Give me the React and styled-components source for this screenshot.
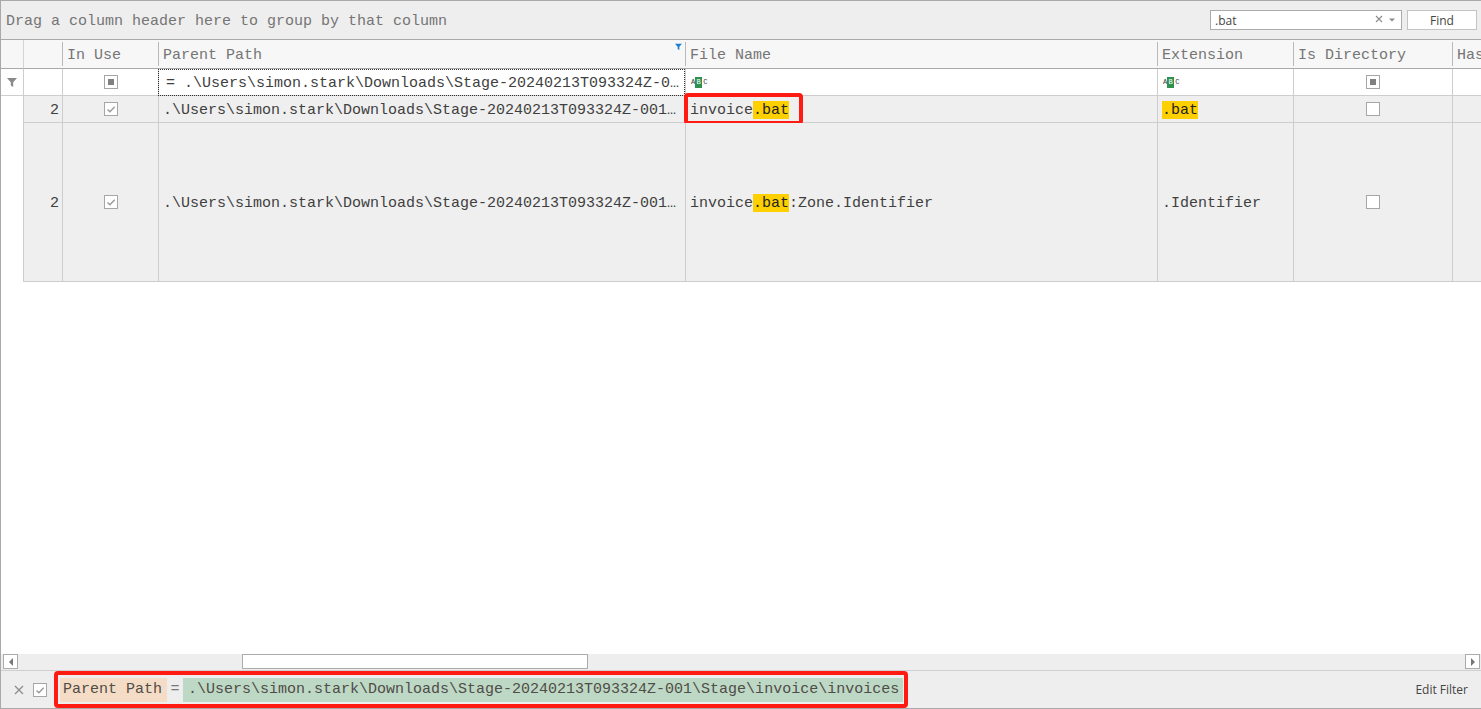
import React from "react";
import styled, { createGlobalStyle } from "styled-components";

const GlobalStyle = createGlobalStyle`
  html, body {
    margin: 0;
    padding: 0;
    height: 100%;
    overflow: hidden;
    background: #fff;
  }
  #root {
    height: 100%;
  }
`;

const MONO = `"Liberation Mono", "DejaVu Sans Mono", monospace`;
const UI = `"Open Sans", "Noto Sans", sans-serif`;
const COLS = [22, 39, 96, 527, 472, 136, 159, 120];
const ROW_BG = "#efefef";
const FULL_PATH = ".\\Users\\simon.stark\\Downloads\\Stage-20240213T093324Z-001\\Stage\\invoice\\invoices";

const Page = styled.div`
  height: 709px;
  box-sizing: border-box;
  display: flex;
  flex-direction: column;
  border-top: 1px solid #a9a9a9;
  border-left: 1px solid #a9a9a9;
  font-family: ${MONO};
  font-size: 15px;
  color: #3f3f3f;
  white-space: nowrap;
  overflow: hidden;
`;

const GroupPanel = styled.div`
  height: 39px;
  flex: none;
  box-sizing: border-box;
  display: flex;
  align-items: center;
  justify-content: space-between;
  padding: 0 4px 0 5px;
  background: #eee;
  border-bottom: 1px solid #a9a9a9;
  color: #757575;
`;

const GroupHint = styled.span`
  padding-top: 2px;
`;

const SearchArea = styled.div`
  display: flex;
  gap: 5px;
  font-family: ${UI};
  font-size: 12px;
  color: #444;
`;

const SearchBox = styled.div`
  width: 192px;
  height: 20px;
  box-sizing: border-box;
  display: flex;
  align-items: center;
  padding: 0 4px;
  background: #fff;
  border: 1px solid #ababab;
`;

const SearchValue = styled.span`
  flex: 1;
`;

const FindButton = styled.div`
  width: 70px;
  height: 20px;
  box-sizing: border-box;
  display: flex;
  align-items: center;
  justify-content: center;
  background: #fff;
  border: 1px solid #c4c4c4;
`;

const GridArea = styled.div`
  flex: 1;
  min-height: 0;
  overflow: hidden;
  background: #fff;
`;

const Row = styled.div`
  display: flex;
  width: max-content;
  height: ${(p) => p.$height}px;
`;

const Cell = styled.div`
  position: relative;
  flex: none;
  width: ${(p) => p.$width}px;
  box-sizing: border-box;
  display: flex;
  align-items: center;
  justify-content: ${(p) => p.$justify || "flex-start"};
  padding: ${(p) => p.$padding || "0 4px"};
  background: ${(p) => p.$bg};
  border-bottom: 1px solid #cdcdcd;
  border-left: ${(p) => (p.$first ? "none" : "1px solid #cdcdcd")};
`;

const CellText = styled.span`
  padding-top: 2px;
`;

const Blank = styled.div`
  flex: none;
  width: ${(p) => p.$width}px;
`;

const HeadCell = styled.div`
  position: relative;
  flex: none;
  width: ${(p) => p.$width}px;
  box-sizing: border-box;
  height: 100%;
  display: flex;
  align-items: center;
  padding: 2px 0;
  background: #f7f7f7;
  border-bottom: 1px solid #a9a9a9;
  border-left: ${(p) => (p.$edge ? "1px solid #d4d4d4" : "none")};
  color: #757575;
`;

const HeadLabel = styled.div`
  height: 100%;
  flex: 1;
  display: flex;
  align-items: center;
  box-sizing: border-box;
  padding: 2px 0 0 4px;
  border-left: ${(p) => (p.$noLine ? "none" : "1px solid #b9b9b9")};
`;

const FilterMark = styled.div`
  position: absolute;
  top: 3px;
  right: 3px;
  display: flex;
`;

const ActiveCell = styled(Cell)`
  outline: 1px dotted #333;
  outline-offset: -1px;
  padding: 0 0 0 7px;
`;

const Hit = styled.span`
  display: inline-block;
  padding-top: 2px;
  line-height: 16px;
  background: #ffd000;
  color: #222;
`;

const RedBox = styled.div`
  position: absolute;
  left: -2px;
  top: -3px;
  width: 119px;
  height: 32px;
  box-sizing: border-box;
  border: 4px solid #ff1a12;
  border-radius: 4px;
  pointer-events: none;
`;

const Check = styled.span`
  width: 14px;
  height: 14px;
  box-sizing: border-box;
  display: flex;
  align-items: center;
  justify-content: center;
  flex: none;
  background: #fff;
  border: 1px solid #a6a6a6;
`;

const CheckDot = styled.span`
  width: 6px;
  height: 6px;
  background: #808080;
`;

const AbcIcon = styled.span`
  display: inline-flex;
  align-items: center;
  margin-left: 1px;
  font-size: 7px;
  line-height: 9px;
  color: #333;
`;

const AbcGreen = styled.span`
  width: 7px;
  height: 11px;
  margin-right: 1px;
  display: flex;
  align-items: center;
  justify-content: center;
  background: #2f9150;
  color: #fff;
`;

const ScrollBar = styled.div`
  height: 17px;
  flex: none;
  box-sizing: border-box;
  display: flex;
  align-items: flex-start;
  padding: 0 1px 0 2px;
  background: #eee;
  border-bottom: 1px solid #cfcfcf;
`;

const ScrollButton = styled.div`
  width: 15px;
  height: 15px;
  box-sizing: border-box;
  flex: none;
  display: flex;
  align-items: center;
  justify-content: center;
  background: #fff;
  border: 1px solid #ababab;
`;

const ScrollTrack = styled.div`
  flex: 1;
  height: 15px;
  padding-left: 224px;
`;

const ScrollThumb = styled.div`
  width: 346px;
  height: 15px;
  box-sizing: border-box;
  background: #fff;
  border: 1px solid #ababab;
`;

const FilterBar = styled.div`
  height: 38px;
  flex: none;
  box-sizing: border-box;
  display: flex;
  align-items: center;
  background: #eee;
  border-bottom: 1px solid #a9a9a9;
  padding: 0 13px 0 13px;
`;

const CloseMark = styled.svg`
  flex: none;
  margin-right: 9px;
`;

const FilterBox = styled.div`
  height: 37px;
  width: 854px;
  margin-left: 7px;
  box-sizing: border-box;
  display: flex;
  align-items: center;
  padding: 0 0 0 2px;
  border: 4px solid #ff1a12;
  border-radius: 4px;
`;

const FilterTag = styled.span`
  height: 24px;
  box-sizing: border-box;
  display: flex;
  align-items: center;
  padding: ${(p) => p.$padding};
  background: ${(p) => p.$bg};
  color: #504c47;
`;

const FilterEq = styled.span`
  width: 16px;
  text-align: center;
  color: #777;
`;

const EditFilter = styled.span`
  margin-left: auto;
  font-family: ${UI};
  font-size: 12px;
  color: #444;
`;

const Funnel = ({ size = 10, color = "#8a8a8a" }) => (
  <svg width={size} height={size} viewBox="0 0 10 10">
    <path d="M0 1h10L6.2 5.2V10L3.8 8.4V5.2z" fill={color} />
  </svg>
);

const Tick = () => (
  <svg width="10" height="10" viewBox="0 0 10 10">
    <path d="M1.5 5.5l2.4 2.3 4.8-5" fill="none" stroke="#9a9a9a" strokeWidth="1.4" />
  </svg>
);

const Abc = () => (
  <AbcIcon>
    A<AbcGreen>B</AbcGreen>C
  </AbcIcon>
);

const DataRow = ({ height, count, fileName, extension, checked }) => (
  <Row $height={height}>
    <Blank $width={COLS[0]} />
    <Cell $width={COLS[1]} $bg={ROW_BG} $justify="flex-end" $padding="0 3px">
      <CellText>{count}</CellText>
    </Cell>
    <Cell $width={COLS[2]} $bg={ROW_BG} $justify="center">
      <Check>{checked && <Tick />}</Check>
    </Cell>
    <Cell $width={COLS[3]} $bg={ROW_BG} $padding="0 0 0 4px">
      <CellText>.\Users\simon.stark\Downloads\Stage-20240213T093324Z-001…</CellText>
    </Cell>
    <Cell $width={COLS[4]} $bg={ROW_BG}>
      <CellText>{fileName}</CellText>
    </Cell>
    <Cell $width={COLS[5]} $bg={ROW_BG} $padding="0 0 0 4px">
      <CellText>{extension}</CellText>
    </Cell>
    <Cell $width={COLS[6]} $bg={ROW_BG} $justify="center">
      <Check />
    </Cell>
    <Cell $width={COLS[7]} $bg={ROW_BG} />
  </Row>
);

export default function App() {
  return (
    <>
      <GlobalStyle />
      <Page>
        <GroupPanel>
          <GroupHint>Drag a column header here to group by that column</GroupHint>
          <SearchArea>
            <SearchBox>
              <SearchValue>.bat</SearchValue>
              <svg width="22" height="10" viewBox="0 0 22 10">
                <path d="M1 1l6 6M7 1L1 7" stroke="#8a8a8a" strokeWidth="1.1" fill="none" />
                <path d="M14 3.5h6L17 6.5z" fill="#8a8a8a" />
              </svg>
            </SearchBox>
            <FindButton>Find</FindButton>
          </SearchArea>
        </GroupPanel>

        <GridArea>
          <Row $height={29}>
            <HeadCell $width={COLS[0]}><HeadLabel $noLine /></HeadCell>
            <HeadCell $width={COLS[1]} $edge><HeadLabel $noLine /></HeadCell>
            <HeadCell $width={COLS[2]}><HeadLabel>In Use</HeadLabel></HeadCell>
            <HeadCell $width={COLS[3]}>
              <HeadLabel>Parent Path</HeadLabel>
              <FilterMark>
                <Funnel size={7} color="#1a7fd0" />
              </FilterMark>
            </HeadCell>
            <HeadCell $width={COLS[4]}><HeadLabel>File Name</HeadLabel></HeadCell>
            <HeadCell $width={COLS[5]}><HeadLabel>Extension</HeadLabel></HeadCell>
            <HeadCell $width={COLS[6]}><HeadLabel>Is Directory</HeadLabel></HeadCell>
            <HeadCell $width={COLS[7]}><HeadLabel>Has</HeadLabel></HeadCell>
          </Row>

          <Row $height={27}>
            <Cell $width={COLS[0]} $bg="#fff" $first $padding="0 0 0 6px">
              <Funnel />
            </Cell>
            <Cell $width={COLS[1]} $bg="#fff" />
            <Cell $width={COLS[2]} $bg="#fff" $justify="center">
              <Check><CheckDot /></Check>
            </Cell>
            <ActiveCell $width={COLS[3]} $bg="#fff">
              <CellText>= .\Users\simon.stark\Downloads\Stage-20240213T093324Z-0…</CellText>
            </ActiveCell>
            <Cell $width={COLS[4]} $bg="#fff"><Abc /></Cell>
            <Cell $width={COLS[5]} $bg="#fff"><Abc /></Cell>
            <Cell $width={COLS[6]} $bg="#fff" $justify="center">
              <Check><CheckDot /></Check>
            </Cell>
            <Cell $width={COLS[7]} $bg="#fff" />
          </Row>

          <DataRow
            height={27}
            count={2}
            checked
            fileName={
              <>
                invoice<Hit>.bat</Hit>
                <RedBox />
              </>
            }
            extension={<Hit>.bat</Hit>}
          />
          <DataRow
            height={159}
            count={2}
            checked
            fileName={
              <>
                invoice<Hit>.bat</Hit>:Zone.Identifier
              </>
            }
            extension=".Identifier"
          />
        </GridArea>

        <ScrollBar>
          <ScrollButton>
            <svg width="6" height="8" viewBox="0 0 6 8"><path d="M5 0v8L1 4z" fill="#777" /></svg>
          </ScrollButton>
          <ScrollTrack>
            <ScrollThumb />
          </ScrollTrack>
          <ScrollButton>
            <svg width="6" height="8" viewBox="0 0 6 8"><path d="M1 0v8l4-4z" fill="#777" /></svg>
          </ScrollButton>
        </ScrollBar>

        <FilterBar>
          <CloseMark width="10" height="10" viewBox="0 0 10 10">
            <path d="M1 1l8 8M9 1L1 9" stroke="#8a8a8a" strokeWidth="1.2" fill="none" />
          </CloseMark>
          <Check><Tick /></Check>
          <FilterBox>
            <FilterTag $bg="#f5dcc6" $padding="0 5px 0 3px">Parent Path</FilterTag>
            <FilterEq>=</FilterEq>
            <FilterTag $bg="#bdd8c5" $padding="0 4px 0 5px">{FULL_PATH}</FilterTag>
          </FilterBox>
          <EditFilter>Edit Filter</EditFilter>
        </FilterBar>
      </Page>
    </>
  );
}
